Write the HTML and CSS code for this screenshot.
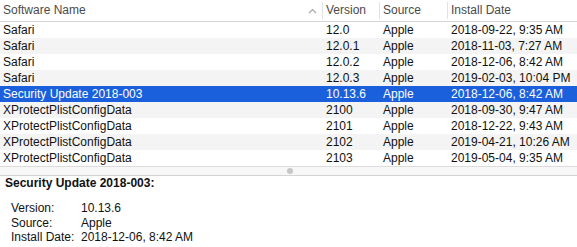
FILE: index.html
```html
<!DOCTYPE html>
<html lang="en">
<head>
  <meta charset="UTF-8">
  <title>Installations</title>
  <link rel="stylesheet" href="styles.css">
</head>
<body>
  <div class="list">
    <div class="row head">
      <div class="cell name">Software Name</div>
      <div class="cell sorted"><span class="arrow"><svg width="9" height="6" viewBox="0 0 9 6"><path d="M1 5 L4.5 1.5 L8 5" fill="none" stroke="#a8a8a8" stroke-width="1.2"/></svg></span></div>
      <div class="cell col">Version</div>
      <div class="cell col">Source</div>
      <div class="cell col">Install Date</div>
    </div>
    <div class="row"><div class="cell name">Safari</div><div class="cell"></div><div class="cell col">12.0</div><div class="cell col">Apple</div><div class="cell col">2018-09-22, 9:35 AM</div></div>
    <div class="row alt"><div class="cell name">Safari</div><div class="cell"></div><div class="cell col">12.0.1</div><div class="cell col">Apple</div><div class="cell col">2018-11-03, 7:27 AM</div></div>
    <div class="row"><div class="cell name">Safari</div><div class="cell"></div><div class="cell col">12.0.2</div><div class="cell col">Apple</div><div class="cell col">2018-12-06, 8:42 AM</div></div>
    <div class="row alt"><div class="cell name">Safari</div><div class="cell"></div><div class="cell col">12.0.3</div><div class="cell col">Apple</div><div class="cell col">2019-02-03, 10:04 PM</div></div>
    <div class="row selected"><div class="cell name">Security Update 2018-003</div><div class="cell"></div><div class="cell col">10.13.6</div><div class="cell col">Apple</div><div class="cell col">2018-12-06, 8:42 AM</div></div>
    <div class="row alt"><div class="cell name">XProtectPlistConfigData</div><div class="cell"></div><div class="cell col">2100</div><div class="cell col">Apple</div><div class="cell col">2018-09-30, 9:47 AM</div></div>
    <div class="row"><div class="cell name">XProtectPlistConfigData</div><div class="cell"></div><div class="cell col">2101</div><div class="cell col">Apple</div><div class="cell col">2018-12-22, 9:43 AM</div></div>
    <div class="row alt"><div class="cell name">XProtectPlistConfigData</div><div class="cell"></div><div class="cell col">2102</div><div class="cell col">Apple</div><div class="cell col">2019-04-21, 10:26 AM</div></div>
    <div class="row"><div class="cell name">XProtectPlistConfigData</div><div class="cell"></div><div class="cell col">2103</div><div class="cell col">Apple</div><div class="cell col">2019-05-04, 9:35 AM</div></div>
  </div>
  <div class="splitter"><span class="grip"></span></div>
  <div class="details">
    <h3>Security Update 2018-003:</h3>
    <dl>
      <dt>Version:</dt><dd>10.13.6</dd>
      <dt>Source:</dt><dd>Apple</dd>
      <dt>Install Date:</dt><dd>2018-12-06, 8:42 AM</dd>
    </dl>
  </div>
</body>
</html>
```
FILE: styles.css
```css
body {
  margin: 0;
  font-family: "Liberation Sans", Arial, sans-serif;
  font-size: 12px;
  color: #111;
  background: #fff;
  width: 577px;
  height: 247px;
  overflow: hidden;
}
.list {
  height: 166px;
}
.row {
  display: grid;
  grid-template-columns: 305px 17px 57px 68px 1fr;
  height: 16px;
  line-height: 16px;
  white-space: nowrap;
}
.row.alt {
  background: #f4f4f4;
}
.row.selected {
  background: #1a5fdb;
  color: #fff;
}
.cell {
  overflow: hidden;
}
.name {
  padding-left: 3px;
}
.col {
  padding-left: 4px;
}
.head {
  height: 21px;
  line-height: 21px;
  color: #4a4a4a;
  border-bottom: 1px solid #d8d8d8;
}
.head .col {
  border-left: 1px solid #e2e2e2;
  padding-left: 3px;
  line-height: 17px;
  margin: 2px 0;
}
.sorted {
  display: flex;
  align-items: center;
  justify-content: center;
  padding-right: 2px;
}
.arrow svg {
  display: block;
}
.splitter {
  height: 8px;
  background: #f7f7f7;
  border-top: 1px solid #dcdcdc;
  border-bottom: 1px solid #d4d4d4;
  display: flex;
  justify-content: center;
  align-items: center;
}
.grip {
  width: 6px;
  height: 6px;
  border-radius: 50%;
  background: #c6c6c6;
  margin-left: 3px;
}
.details {
  padding-left: 5px;
}
.details h3 {
  margin: 0;
  font-size: 12px;
  font-weight: bold;
  line-height: 14px;
}
.details dl {
  display: grid;
  grid-template-columns: 70px 1fr;
  margin: 11px 0 0 6px;
  line-height: 14.5px;
}
.details dt,
.details dd {
  margin: 0;
}
```
